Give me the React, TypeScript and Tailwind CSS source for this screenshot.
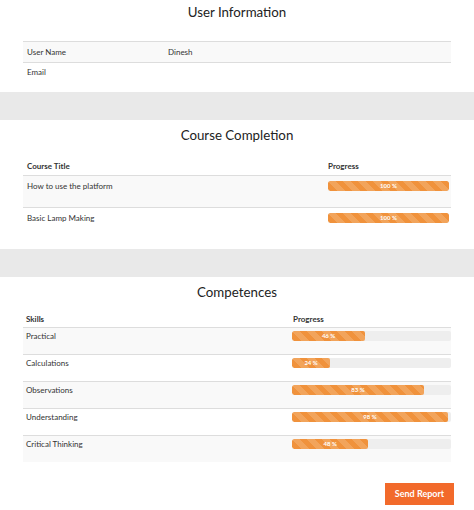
import React from 'react';

const stripes =
  "bg-[#f0923c] bg-[linear-gradient(45deg,rgba(255,255,255,.16)_25%,transparent_25%,transparent_50%,rgba(255,255,255,.16)_50%,rgba(255,255,255,.16)_75%,transparent_75%,transparent)] bg-[length:15px_15px]";

const courses = [
  { title: 'How to use the platform', progress: 100 },
  { title: 'Basic Lamp Making', progress: 100 },
];

const skills = [
  { name: 'Practical', progress: 46 },
  { name: 'Calculations', progress: 24 },
  { name: 'Observations', progress: 83 },
  { name: 'Understanding', progress: 98 },
  { name: 'Critical Thinking', progress: 48 },
];

const ProgressBar: React.FC<{ value: number; width: string }> = ({ value, width }) => (
  <div className={`${width} h-[10px] rounded-[2px] bg-[#eeeeee] overflow-hidden`}>
    <div
      className={`h-full rounded-[2px] ${stripes} flex items-center justify-center text-white text-[6px] leading-none font-bold`}
      style={{ width: `${value}%` }}
    >
      {value} %
    </div>
  </div>
);

const Band = () => <div className="h-[28px] bg-[#e9e9e9]" />;

const Title: React.FC<{ children: React.ReactNode }> = ({ children }) => (
  <h2 className="text-center text-[13.3px] leading-[24px] text-[#222]">{children}</h2>
);

export default function App() {
  return (
    <div className="w-[474px] min-h-[510px] bg-white font-['Lato',sans-serif] text-[8px] text-[#333]">
      {/* User information */}
      <div className="pb-[11px]">
        <Title>User Information</Title>
        <div className="mx-[23px] mt-[17px] border-t border-[#dddddd]">
          <div className="flex h-[21px] items-center bg-[#f9f9f9] border-b border-[#dddddd]">
            <div className="w-[145px] pl-[4px]">User Name</div>
            <div>Dinesh</div>
          </div>
          <div className="flex h-[18px] items-center">
            <div className="w-[145px] pl-[4px]">Email</div>
          </div>
        </div>
      </div>

      <Band />

      {/* Course completion */}
      <div className="pt-[3px] pb-[10px]">
        <Title>Course Completion</Title>
        <div className="mx-[23px] mt-[10px]">
          <div className="flex h-[18px] items-end pb-[3px] font-bold leading-[11px]">
            <div className="w-[300px] pl-[4px]">Course Title</div>
            <div className="pl-[5px]">Progress</div>
          </div>
          {courses.map((c, i) => (
            <div
              key={c.title}
              className={`flex h-[32px] border-t border-[#dddddd] pt-[5px] ${i % 2 === 0 ? 'bg-[#f9f9f9]' : ''}`}
            >
              <div className="w-[300px] pl-[4px] leading-[11px]">{c.title}</div>
              <div className="pl-[5px]">
                <ProgressBar value={c.progress} width="w-[121px]" />
              </div>
            </div>
          ))}
        </div>
      </div>

      <Band />

      {/* Competences */}
      <div className="pt-[3px]">
        <Title>Competences</Title>
        <div className="mx-[23px] mt-[6px]">
          <div className="flex h-[17px] items-end pb-[2px] font-bold leading-[11px]">
            <div className="w-[265px] pl-[3px]">Skills</div>
            <div className="pl-[5px]">Progress</div>
          </div>
          {skills.map((s, i) => (
            <div
              key={s.name}
              className={`flex h-[27px] border-t border-[#dddddd] pt-[2px] ${i % 2 === 0 ? 'bg-[#f9f9f9]' : ''}`}
            >
              <div className="w-[265px] pl-[3px] pt-[1px] leading-[11px]">{s.name}</div>
              <div className="pl-[5px] pt-[1px]">
                <ProgressBar value={s.progress} width="w-[159px]" />
              </div>
            </div>
          ))}
        </div>
        <div className="flex justify-end mx-[20px] mt-[21px] pb-[5px]">
          <button className="w-[69px] h-[22px] bg-[#f26a2b] text-white text-[9px] font-bold">
            Send Report
          </button>
        </div>
      </div>
    </div>
  );
}
